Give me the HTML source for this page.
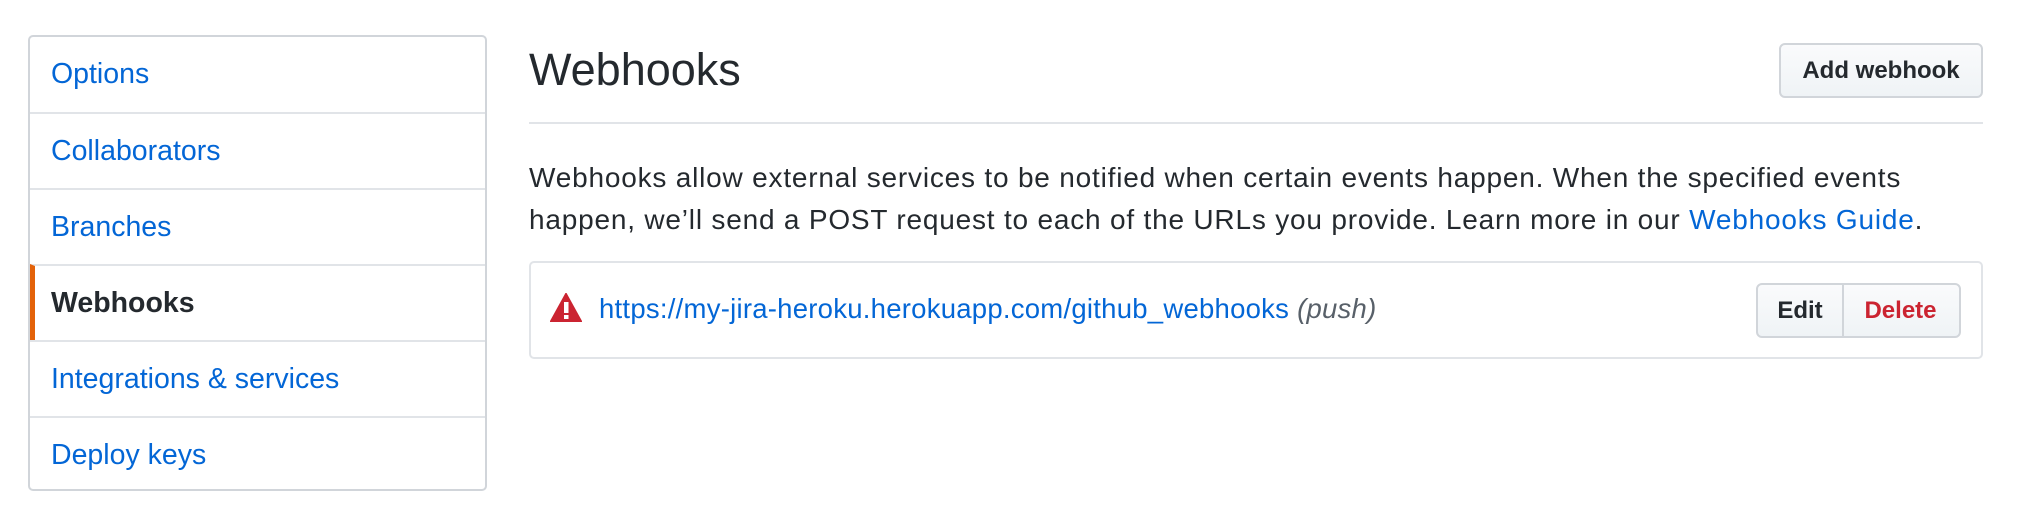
<!DOCTYPE html>
<html><head><meta charset="utf-8"><style>
*{box-sizing:border-box;margin:0;padding:0}
body{width:2028px;height:518px;background:#fff;font-family:"Liberation Sans",sans-serif;color:#24292e;position:relative;overflow:hidden}
.side{position:absolute;left:28px;top:35px;width:459px;height:456px;border:2px solid #d1d5da;border-radius:5px;overflow:hidden}
.item{position:absolute;left:0;right:0;height:76px;border-top:2px solid #e1e4e8;font-size:28.5px;color:#0366d6;padding-left:21px;line-height:74px}
.item.first{border-top:none}
.item.sel{color:#24292e;font-weight:bold;border-left:5px solid #e36209;padding-left:16px}
.abs{position:absolute}
h1{position:absolute;left:529px;top:40px;font-size:45px;font-weight:normal;line-height:60px}
.hr{position:absolute;left:529px;top:122px;width:1454px;height:2px;background:#e1e4e8}
.btn{position:absolute;background:linear-gradient(#fafbfc,#eff3f6);border:2px solid #d1d5da;border-radius:6px;font-weight:bold;font-size:24px;text-align:center}
p{position:absolute;left:529px;top:157px;font-size:28px;letter-spacing:0.8px;line-height:42px;width:1460px;white-space:nowrap}
a{color:#0366d6;text-decoration:none}
.box{position:absolute;left:529px;top:261px;width:1454px;height:98px;border:2px solid #e1e4e8;border-radius:5px}
</style></head><body>
<div class="side">
<div class="item first" style="top:0">Options</div>
<div class="item" style="top:75px">Collaborators</div>
<div class="item" style="top:151px">Branches</div>
<div class="item sel" style="top:227px">Webhooks</div>
<div class="item" style="top:303px">Integrations &amp; services</div>
<div class="item" style="top:379px">Deploy keys</div>
</div>
<h1>Webhooks</h1>
<div class="btn" style="left:1779px;top:43px;width:204px;height:55px;line-height:51px">Add webhook</div>
<div class="hr"></div>
<p>Webhooks allow external services to be notified when certain events happen. When the specified events<br>happen, we’ll send a POST request to each of the URLs you provide. Learn more in our <a>Webhooks Guide</a>.</p>
<div class="box"></div>
<svg class="abs" style="left:550px;top:293px" width="32" height="29" viewBox="0 0 32 29"><path d="M16 0 L32 29 L0 29 Z" fill="#cb2431" stroke="#cb2431" stroke-linejoin="round" stroke-width="1"/><rect x="14" y="9" width="4.5" height="11" fill="#fff"/><rect x="14" y="22" width="4.5" height="4" fill="#fff"/></svg>
<div class="abs" style="left:599px;top:292px;font-size:27.5px;letter-spacing:0.25px;line-height:34px;white-space:nowrap"><a>https://my-jira-heroku.herokuapp.com/github_webhooks</a> <i style="color:#586069">(push)</i></div>
<div class="btn" style="left:1756px;top:283px;width:205px;height:55px;line-height:51px;text-align:left">
<span style="display:inline-block;width:86px;text-align:center;border-right:2px solid #d1d5da">Edit</span><span style="display:inline-block;width:113px;text-align:center;color:#cb2431">Delete</span></div>
</body></html>
